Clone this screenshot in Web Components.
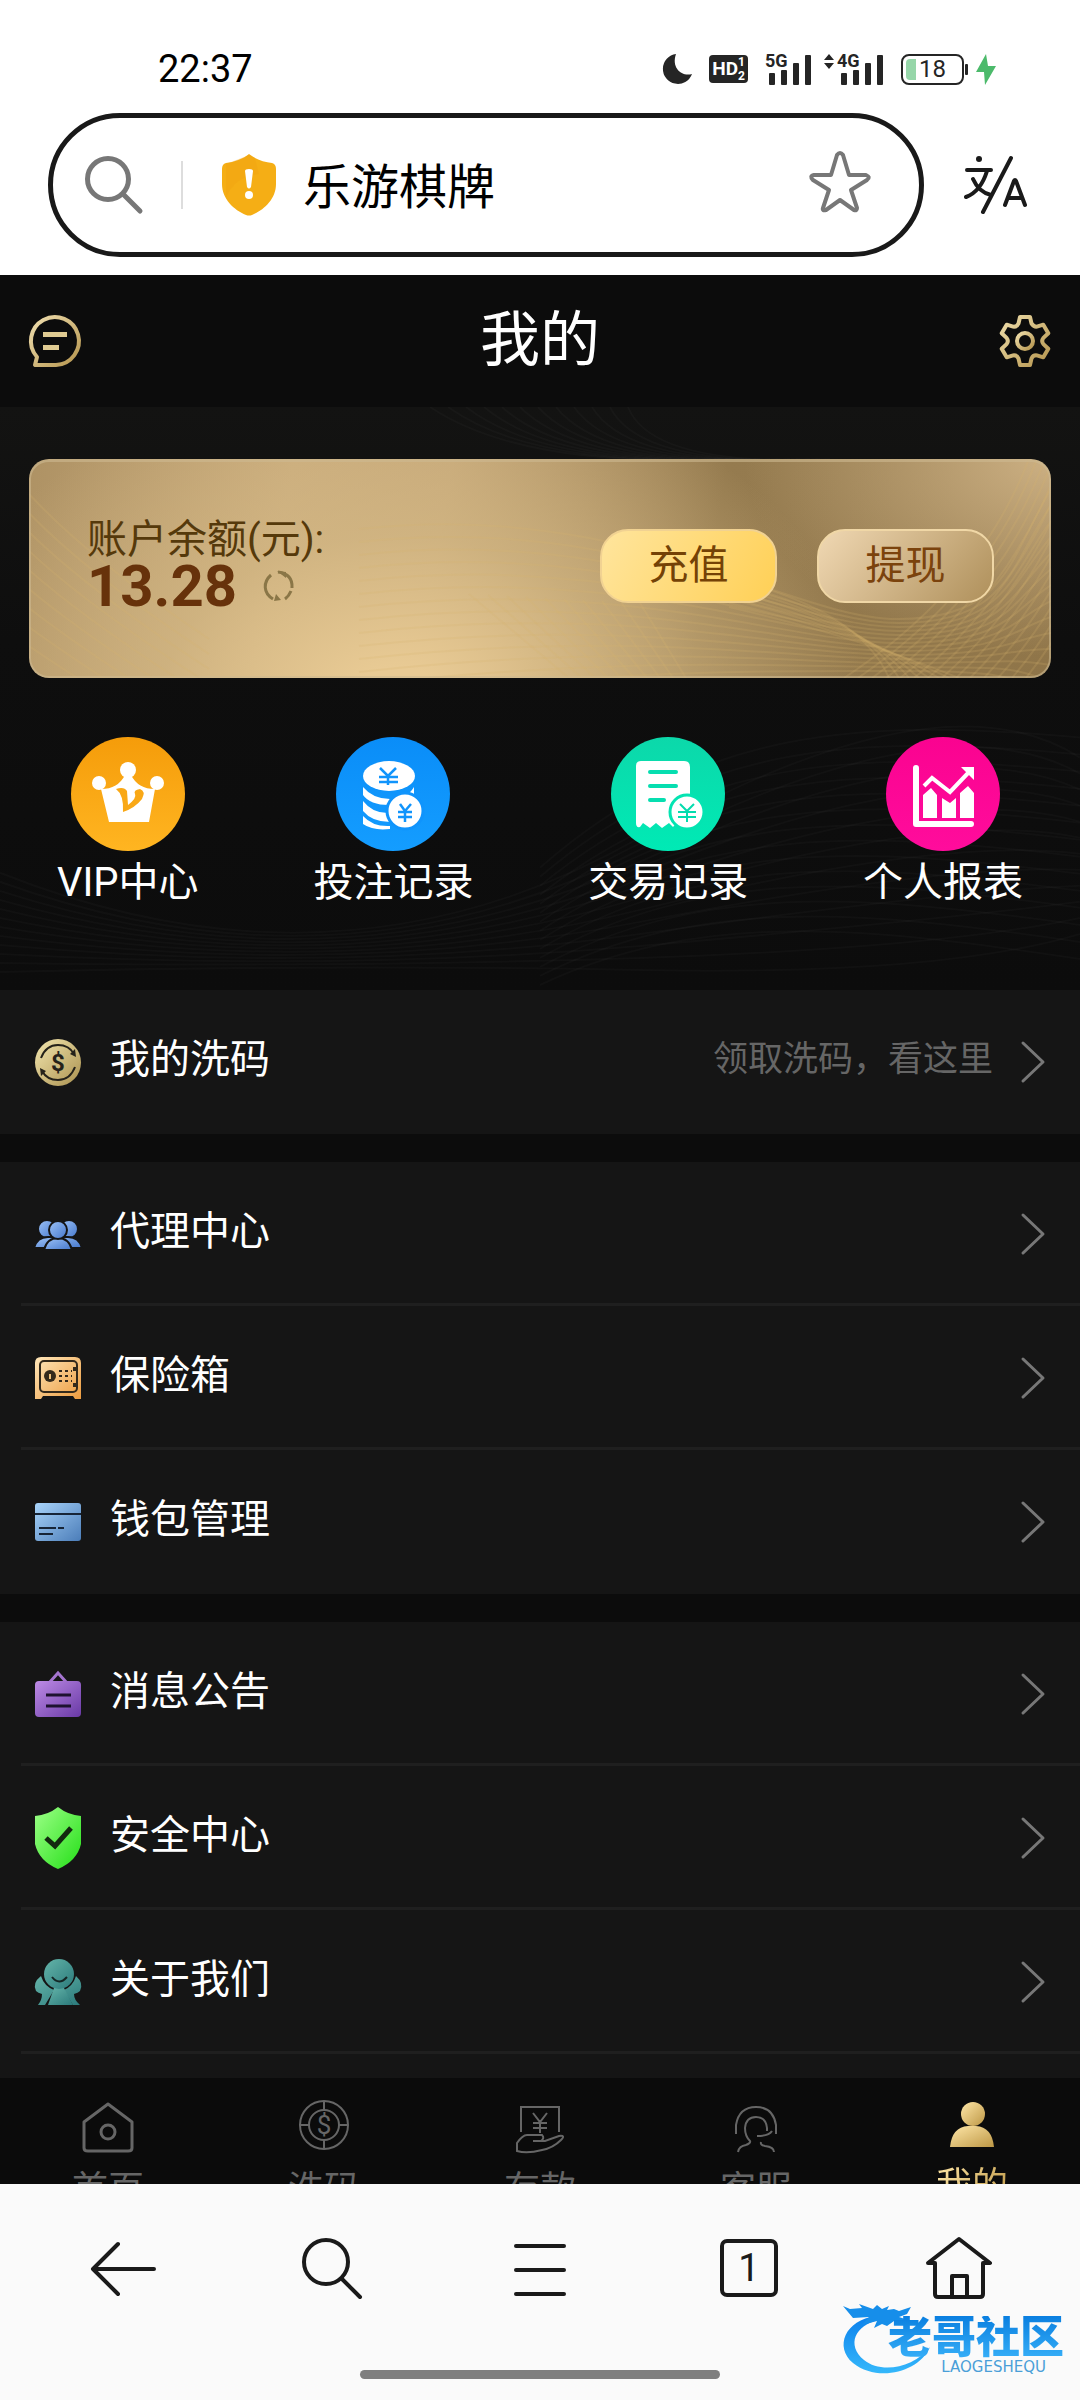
<!DOCTYPE html>
<html lang="zh-CN">
<head>
<meta charset="utf-8">
<meta name="viewport" content="width=device-width, initial-scale=1">
<title>我的</title>
<style>
  html, body {
    height: 100%;
    margin: 0;
  }

  body {
    display: flex;
    flex-direction: column;
    background: #0c0c0c;
    color: #fff;
    font-family: Roboto, "Noto Sans CJK SC", sans-serif;
    font-size: 40px;
  }
</style>
</head>
<body>
  <status-bar time="22:37" battery="18"></status-bar>
  <address-bar value="乐游棋牌"></address-bar>

  <web-view>
    <page-header>我的</page-header>
    <page-hero>
      <balance-card amount="13.28">账户余额(元):</balance-card>
      <quick-links>
        <quick-link icon="vip">VIP中心</quick-link>
        <quick-link icon="bets">投注记录</quick-link>
        <quick-link icon="receipt">交易记录</quick-link>
        <quick-link icon="report">个人报表</quick-link>
      </quick-links>
    </page-hero>
    <menu-group>
      <menu-row icon="rebate" hint="领取洗码，看这里" plain>我的洗码</menu-row>
    </menu-group>
    <menu-group>
      <menu-row icon="agents">代理中心</menu-row>
      <menu-row icon="safe">保险箱</menu-row>
      <menu-row icon="card" plain>钱包管理</menu-row>
    </menu-group>
    <menu-group last>
      <menu-row icon="notice">消息公告</menu-row>
      <menu-row icon="security">安全中心</menu-row>
      <menu-row icon="about">关于我们</menu-row>
    </menu-group>
    <tab-bar slot="tabs">
      <tab-item icon="tab-home">首页</tab-item>
      <tab-item icon="tab-rebate">洗码</tab-item>
      <tab-item icon="tab-deposit">存款</tab-item>
      <tab-item icon="tab-service">客服</tab-item>
      <tab-item icon="tab-me" active>我的</tab-item>
    </tab-bar>
  </web-view>

  <browser-nav tabs="1"></browser-nav>

<script>
const gradient = (from, to, x2 = 1) => `
  <defs><linearGradient id="g" x1="0" y1="0" x2="${x2}" y2="1">
    <stop stop-color="${from}"/><stop offset="1" stop-color="${to}"/>
  </linearGradient></defs>`;

// name: [width, height, markup]
const icons = {
  moon: [30, 30, `<path fill="#252525" d="M14 0A15 15 0 1 0 30 20C20 23 9 14 14 0Z"/>`],
  bolt: [20, 31, `<path fill="#4cba6b" d="M10 0 0 18h8l1 13L20 12h-8Z"/>`],
  search: [58, 58, `<g fill="none" stroke="#777" stroke-width="5" stroke-linecap="round">
    <circle cx="23" cy="23" r="20.5"/><path d="m39 39 16 16"/></g>`],
  warning: [56, 62, `<path fill="#f5ae15" d="M28 0C34 5 43 8 51 9q4 1 4 6V30C55 45 43 56 31 61q-3 1-6 0C13 56 1 45 1 30V15q0-5 4-6C13 8 22 5 28 0Z"/>
    <path fill="#f0a012" d="M28 1 5 10v34C12 26 26 22 38 20L34 4Z" opacity=".3"/>
    <path fill="#fff" d="M24 17q0-2 4-2t4 2l-2 16q-2 3-4 0Z"/><circle cx="28" cy="41" r="4" fill="#fff"/>`],
  star: [62, 60, `<path fill="none" stroke="#777" stroke-width="4" stroke-linejoin="round" d="M28 3q3-4 6 0l6 20h17q5 2 1 5L42 38l6 18q0 3-3 2L31 48 17 58q-4 1-3-2l6-18L4 28q-4-4 1-5h17Z"/>`],
  translate: [64, 60, `<g fill="none" stroke="#1a1a1a" stroke-width="4" stroke-linecap="round" stroke-linejoin="round">
    <path d="M3 15h24M23 16C19 29 13 38 2 42M9 24c4 9 9 14 18 16M47 3 19 57M41 50l9-24q1-2 2 0l9 24M44 43h14"/></g>
    <circle cx="15" cy="4" r="3" fill="#1a1a1a"/>`],
  chat: [52, 52, `${gradient('#f0dfb0', '#b6964f')}
    <path fill="none" stroke="url(#g)" stroke-width="4" stroke-linejoin="round" d="M6 50H27A24 24 0 1 0 8 42Z"/>
    <path fill="#e0cb92" d="M14 17h24v5H14Zm0 13h16v5H14Z"/>`],
  gear: [52, 52, `${gradient('#eeddaa', '#b6964f')}
    <g transform="translate(26 26)" fill="none" stroke="url(#g)" stroke-width="4" stroke-linejoin="round">
    <path d="M-5-24H5L6.5-17.5Q9-14 11.9-14.4L18.3-16.3 23.3-7.7 18.4-3.1Q16 0 18.4 3.1L23.3 7.7 18.3 16.3 11.9 14.4Q8 14 6.5 17.5L5 24H-5L-6.5 17.5Q-8 14-11.9 14.4L-18.3 16.3-23.3 7.7-18.4 3.1Q-16 0-18.4-3.1L-23.3-7.7-18.3-16.3-11.9-14.4Q-8-14-6.5-17.5Z"/>
    <circle r="8"/></g>`],
  refresh: [30, 30, `<g fill="none" stroke="#8a7647" stroke-width="3"><path d="M7 4C-1 11-1 22 9 28M14 1Q29 3 28 17M27 20q-2 5-6 8"/></g>
    <path fill="#8a7647" d="m13 0 9 1v6Zm4 29-7 1 2-7Z"/>`],
  vip: [114, 114, `${gradient('#f59c0a', '#ffb521', 0)}<circle cx="57" cy="57" r="57" fill="url(#g)"/>
    <g fill="#fff"><circle cx="57" cy="33" r="8"/><circle cx="28" cy="46" r="7"/><circle cx="86" cy="46" r="7"/>
    <path d="M30 52Q47 52 54 38h6Q67 52 84 52L78 85H38Z"/></g>
    <path fill="#f9a816" d="M45 52q8-3 11 2l1 14q9-7 7-11-2-4 5-5 6 2 2 10-7 9-19 13Q53 58 45 52Z"/>`],
  bets: [114, 114, `${gradient('#0a8df8', '#149dff', 0)}<circle cx="57" cy="57" r="57" fill="url(#g)"/>
    <g fill="#fff"><ellipse cx="53" cy="39" rx="26" ry="15"/>
    <path d="M27 50q10 12 27 12t24-12v7Q69 68 53 68 34 68 27 58Zm0 14q10 13 27 12v9Q36 85 27 74Zm0 15q10 11 27 10v3Q37 94 27 87Z"/></g>
    <circle cx="69" cy="74" r="18" fill="#fff" stroke="#1094fc" stroke-width="3"/>
    <g fill="none" stroke="#1094fc" stroke-width="2.5"><path d="m44 31 8 8 8-8M52 39v9M43 40h19M43 45h19m2 22 5 7 6-7m-6 7v11m-7-10h14m-14 5h14"/></g>`],
  receipt: [114, 114, `${gradient('#0cd8aa', '#00eab5', 0)}<circle cx="57" cy="57" r="57" fill="url(#g)"/>
    <path fill="#fff" d="M30 24h43q6 0 6 6v40L62 90l-4-4-7 5-6-5-6 5-7-5-3 4q-4 1-4-4V29q0-5 5-5Z"/>
    <path fill="none" stroke="#06deb0" stroke-width="4" stroke-linecap="round" d="M39 35h26M39 49h26M39 63h14"/>
    <circle cx="76" cy="75" r="17" fill="#fff" stroke="#04e4b2" stroke-width="3"/>
    <path fill="none" stroke="#04dcae" stroke-width="2" d="m69 67 7 7 7-7m-7 7v11m-9-10h18m-18 5h18"/>`],
  report: [114, 114, `${gradient('#fa0390', '#ff0c9c', 0)}<circle cx="57" cy="57" r="57" fill="url(#g)"/>
    <path fill="none" stroke="#fff" stroke-width="6" stroke-linecap="round" stroke-linejoin="round" d="M30 31v56h55"/>
    <path fill="#fff" d="m37 58 8-7 6 7v23H37Zm19 3 8 5 6-5v20H56Zm18-5 8-7 6 7v25H74ZM75 30h13v13Z"/>
    <path fill="none" stroke="#fff" stroke-width="4" d="m38 49 8-8 18 14 19-20"/>`],
  rebate: [46, 47, `${gradient('#f3e6af', '#aa914f')}<ellipse cx="23" cy="23.5" rx="23" ry="23.5" fill="url(#g)"/>
    <g fill="none" stroke="#25221a" stroke-width="2"><path d="M6 19Q11 6 23 6q11 0 16 9M40 28Q35 41 23 41 12 41 7 32"/></g>
    <path fill="#25221a" d="m40 10 1 8-6-3ZM6 37l-1-8 6 3Z"/>
    <text x="23" y="32" font-size="24" font-weight="700" fill="#25221a" text-anchor="middle">$</text>`],
  agents: [46, 30, `${gradient('#9dc3f8', '#4577cb')}<g fill="url(#g)" stroke="#151515" stroke-width="2">
    <circle cx="12" cy="10" r="9"/><circle cx="34" cy="10" r="9"/>
    <path d="M-1 29Q2 18 13 18h20Q44 18 47 29Z"/><path d="M9 31Q12 19 23 19T37 31Z"/><circle cx="23" cy="11" r="9"/></g>`],
  safe: [46, 42, `${gradient('#ffe6b9', '#ec9c40')}<path fill="url(#g)" d="M6 0h34q6 0 6 6v36h-6l-2-3H8l-2 3H0V6q0-6 6-6Z"/>
    <rect x="5" y="4" width="37" height="31" rx="4" fill="none" stroke="#33291b" stroke-width="2"/>
    <circle cx="15" cy="19" r="6" fill="#33291b"/><path stroke="#efc17a" stroke-width="2" d="M15 17v5"/>
    <path stroke="#33291b" stroke-width="2" stroke-dasharray="3 3" d="M24 14h13M24 19h13M24 24h13"/><path fill="#33291b" d="M38 10h4v4h-4Zm0 16h4v4h-4Z"/>`],
  card: [46, 38, `${gradient('#a9d4fa', '#4b7db9')}<rect width="46" height="38" rx="3" fill="url(#g)"/>
    <path stroke="#172537" stroke-width="2" d="M0 11h46M4 25h17M23 25h6M4 31h14"/>`],
  notice: [46, 46, `${gradient('#bd8be5', '#6939a6')}<path fill="none" stroke="#a474cf" stroke-width="3" d="m14 12 9-10 9 10"/>
    <rect y="10" width="46" height="36" rx="4" fill="url(#g)"/><path stroke="#1e1230" stroke-width="3" d="M11 24h25M11 35h25"/>`],
  security: [46, 62, `${gradient('#9cff87', '#25df18')}<path fill="url(#g)" d="M23 0Q33 8 46 9V37Q42 54 23 62 4 54 0 37V9Q13 8 23 0Z"/>
    <path fill="none" stroke="#12290f" stroke-width="5" d="m11 31 9 8 16-18"/>`],
  about: [46, 46, `${gradient('#64b4a9', '#2b7a7b')}<g fill="url(#g)">
    <path d="M6 17Q-3 24 1 32q2 2 6 3Q7 41 3 46h7l9-15Q9 27 6 17ZM41 17q8 7 4 15-2 2-6 3 0 6 6 11h-7l-9-15Q38 27 41 17Z"/>
    <path d="M19 29h10l9 17H13Z"/><circle cx="24" cy="15" r="15"/></g>
    <path fill="none" stroke="#152726" stroke-width="2" d="M17 18q7 9 15 0"/>`],
  chevron: [24, 42, `<path fill="none" stroke="#777" stroke-width="3" stroke-linecap="round" stroke-linejoin="round" d="m2 2 20 19L2 40"/>`],
  'tab-home': [52, 52, `<g fill="none" stroke="#666" stroke-width="3" stroke-linejoin="round"><path d="M26 4 2 22v26q0 3 4 3h40q4 0 4-3V22Z"/><circle cx="26" cy="32" r="7"/></g>`],
  'tab-rebate': [52, 52, `<g fill="none" stroke="#666" stroke-width="2"><circle cx="26" cy="25" r="24"/><circle cx="26" cy="25" r="15"/><path d="M26 1v9m0 30v9M2 25h9m30 0h9"/></g>
    <text x="26" y="34" font-size="26" fill="#666" text-anchor="middle">$</text>`],
  'tab-deposit': [52, 52, `<g fill="none" stroke="#666" stroke-width="2"><path d="M7 32V7h38v25M19 13l7 9 7-9m-7 9v11m-7-10h14m-14 5h14M3 51V43q6-9 11-8h14q3 3-1 6h-8 12l14-5q7-1 2 4-8 8-19 10-15 4-25 1Z"/></g>`],
  'tab-service': [52, 52, `<g fill="none" stroke="#666" stroke-width="2"><path d="M6 34V25Q9 7 26 7T46 25v9M16 45q5-2 4-4-5-5-5-13Q16 17 26 17t11 11v3M8 52q1-6 8-7M42 31q-3 5-15 5M31 42q-1 3 4 4 9 1 9 6"/></g>`],
  'tab-me': [48, 48, `${gradient('#ffe7a8', '#bd9745')}<g fill="url(#g)"><circle cx="25" cy="14" r="12"/><path d="M2 47Q4 27 20 26h8q16 1 18 21Z"/></g>`],
  back: [64, 64, `<path fill="none" stroke="#1a1a1a" stroke-width="4" stroke-linecap="round" stroke-linejoin="round" d="M28 8 3 33l25 25M4 33h60"/>`],
  find: [64, 64, `<g fill="none" stroke="#1a1a1a" stroke-width="4" stroke-linecap="round"><circle cx="27" cy="26" r="22"/><path d="m43 43 18 18"/></g>`],
  menu: [64, 64, `<path stroke="#1a1a1a" stroke-width="4" stroke-linecap="round" d="M8 10h48M8 34h48M8 58h48"/>`],
  house: [64, 64, `<g fill="none" stroke="#1a1a1a" stroke-width="4" stroke-linejoin="round"><path d="M2 27 33 3l31 24h-7v31q0 3-3 3H12q-3 0-3-3V27ZM26 61V40h15v21"/></g>`],
};

const waves = (width, height, stroke, paths) => {
  const svg = `<svg xmlns="http://www.w3.org/2000/svg" viewBox="0 0 ${width} ${height}" preserveAspectRatio="none" fill="none" stroke="${stroke}" stroke-width="2">${paths.map(d => `<path d="${d}"/>`).join('')}</svg>`;
  return `url("data:image/svg+xml,${encodeURIComponent(svg)}")`;
};

const times = (n, fn) => Array.from({ length: n }, (_, i) => fn(i));

const cardWaves = waves(1022, 219, 'rgba(215,180,110,.2)', [
  ...times(14, i => `M330 ${70 + i * 13}C600 ${40 + i * 13} 760 ${160 + i * 4} 869 ${160 + i * 4}S980 ${100 + i * 9} 1022 ${30 + i * 16}`),
  ...times(14, i => `M${815 + i * 14} 219Q${950 + i * 9} 130 ${1000 + i * 8} 0`),
  ...times(10, i => `M${440 + i * 19} ${135 + i}L${540 + i * 13} 219`),
  ...times(8, i => `M700 ${120 + i * 4}Q830 ${150 + i * 4} ${860 + i * 10} 219`),
  ...times(9, i => `M0 ${35 + i * 19}Q60 ${100 + i * 16} 180 ${180 + i * 15}`),
]);

const heroWaves = waves(1080, 582, 'rgba(255,255,255,.022)', [
  ...times(12, i => `M0 ${465 + i * 9}Q340 ${600 - i * 4} 640 ${430 + i * 12}T1080 ${350 + i * 16}`),
  ...times(14, i => `M540 ${460 + i * 9}C700 ${320 + i * 14} 860 ${310 + i * 16} 1080 ${330 + i * 17}`),
  ...times(12, i => `M${430 + i * 18} 0Q${520 + i * 12} 60 ${720 + i * 10} 52`),
]);

class BaseElement extends HTMLElement {
  constructor() {
    super();
    this.attachShadow({ mode: 'open' });
  }

  connectedCallback() {
    const template = document.createElement('template');
    template.innerHTML = `
      <style>
        *, *:before, *:after { box-sizing: border-box; }
        :host { display: block; box-sizing: border-box; }
        a { color: inherit; text-decoration: none; }
        button { border: 0; padding: 0; background: none; color: inherit; font: inherit; cursor: pointer; }
        ${this.styles}
      </style>
      ${this.markup}`;
    this.shadowRoot.replaceChildren(template.content.cloneNode(true));
  }

  get styles() { return ''; }
  get markup() { return '<slot></slot>'; }
}

customElements.define('ui-icon', class extends BaseElement {
  get styles() {
    return `:host { flex: none; } svg { display: block; overflow: visible; }`;
  }
  get markup() {
    const [width, height, body] = icons[this.getAttribute('name')];
    return `<svg width="${width}" height="${height}" viewBox="0 0 ${width} ${height}" aria-hidden="true">${body}</svg>`;
  }
});

customElements.define('signal-bars', class extends BaseElement {
  get styles() {
    return `svg { display: block; fill: #252525; font-weight: 700; }`;
  }
  get markup() {
    const x = this.hasAttribute('data') ? 13 : 0;
    return `
      <svg width="${47 + x}" height="34" viewBox="${-x} 0 ${47 + x} 34">
        ${x ? '<path d="m-13 8 5-6 5 6Zm0 3h10l-5 6Z"/>' : ''}
        <text x="0" y="15" font-size="18">${this.getAttribute('label')}</text>
        <rect x="4" y="21" width="6" height="12" rx="1"/><rect x="16" y="18" width="6" height="15" rx="1"/>
        <rect x="28" y="11" width="6" height="22" rx="1"/><rect x="40" y="3" width="6" height="30" rx="1"/>
      </svg>`;
  }
});

customElements.define('status-bar', class extends BaseElement {
  get styles() {
    return `
      :host {
        display: flex;
        justify-content: space-between;
        align-items: center;
        padding: 49px 84px 24px 158px;
        background: #fff;
        color: #000;
        font-size: 38px;
        line-height: 40px;
      }
      .icons { display: flex; align-items: center; gap: 17px; }
      .signals { display: flex; gap: 12px; }
      .power { display: flex; align-items: center; gap: 8px; }
      .hd { display: flex; padding: 0 3px; height: 28px; border-radius: 4px; background: #252525; color: #fff; font-size: 19px; font-weight: 700; line-height: 28px; }
      .sims { display: grid; font-size: 12px; line-height: 13px; padding-top: 1px; }
      .battery { display: flex; align-items: center; }
      .cell {
        display: flex;
        align-items: center;
        gap: 3px;
        width: 63px;
        height: 31px;
        padding: 0 3px;
        border: 2px solid #252525;
        border-radius: 8px;
        color: #252525;
        font-size: 24px;
      }
      .cell:before { content: ""; width: 10px; height: 21px; border-radius: 4px 0 0 4px; background: #96d6a9; }
      .battery:after { content: ""; width: 3px; height: 11px; margin-left: 1px; border-radius: 1px; background: #252525; }
    `;
  }
  get markup() {
    return `
      <time>${this.getAttribute('time')}</time>
      <div class="icons">
        <ui-icon name="moon"></ui-icon>
        <div class="hd">HD<span class="sims"><span>1</span><span>2</span></span></div>
        <div class="signals"><signal-bars label="5G"></signal-bars><signal-bars label="4G" data></signal-bars></div>
        <div class="power">
          <div class="battery"><div class="cell">${this.getAttribute('battery')}</div></div>
          <ui-icon name="bolt"></ui-icon>
        </div>
      </div>`;
  }
});

customElements.define('address-bar', class extends BaseElement {
  get styles() {
    return `
      :host { display: flex; align-items: center; gap: 40px; padding: 0 52px 18px 48px; background: #fff; }
      form {
        flex: 1;
        min-width: 0;
        display: flex;
        align-items: center;
        height: 144px;
        padding: 0 48px 0 32px;
        border: 5px solid #191919;
        border-radius: 72px;
      }
      form button { padding-bottom: 6px; }
      .divider { width: 2px; height: 48px; margin: 0 38px; background: #ddd; }
      input {
        flex: 1;
        min-width: 0;
        margin-left: 26px;
        padding: 6px 0 0;
        border: 0;
        outline: 0;
        background: none;
        color: #000;
        font: inherit;
        font-size: 48px;
        line-height: 64px;
      }
    `;
  }
  get markup() {
    return `
      <form>
        <ui-icon name="search"></ui-icon>
        <span class="divider"></span>
        <ui-icon name="warning"></ui-icon>
        <input type="text" aria-label="网址" value="${this.getAttribute('value')}">
        <button type="button" aria-label="收藏"><ui-icon name="star"></ui-icon></button>
      </form>
      <button type="button" aria-label="翻译"><ui-icon name="translate"></ui-icon></button>`;
  }
});

customElements.define('web-view', class extends BaseElement {
  get styles() {
    return `
      :host { flex: 1; min-height: 0; display: flex; flex-direction: column; }
      main { flex: 1; min-height: 0; display: flex; flex-direction: column; overflow: hidden; }
      main ::slotted(*) { flex-shrink: 0; }
    `;
  }
  get markup() {
    return `<main><slot></slot></main><slot name="tabs"></slot>`;
  }
});

customElements.define('page-header', class extends BaseElement {
  get styles() {
    return `
      :host { display: flex; justify-content: space-between; align-items: center; height: 132px; padding: 0 29px; }
      h1 { margin: 0; font-size: 60px; font-weight: 400; line-height: 72px; }
    `;
  }
  get markup() {
    return `
      <button aria-label="消息"><ui-icon name="chat"></ui-icon></button>
      <h1><slot></slot></h1>
      <button aria-label="设置"><ui-icon name="gear"></ui-icon></button>`;
  }
});

customElements.define('page-hero', class extends BaseElement {
  get styles() {
    return `
      :host {
        padding: 52px 0 79px;
        background: ${heroWaves} 0 0 / 100% 100%, linear-gradient(#131312, #0e0e0e 40%, #0c0c0c);
      }
    `;
  }
});

customElements.define('balance-card', class extends BaseElement {
  get styles() {
    return `
      :host {
        display: flex;
        justify-content: space-between;
        align-items: center;
        margin: 0 29px;
        padding: 54px 55px 60px 56px;
        border: 2px solid rgba(205, 185, 145, .6);
        border-top-width: 3px;
        border-radius: 20px;
        background:
          ${cardWaves} 0 0 / 100% 100% border-box,
          radial-gradient(ellipse 30% 90% at 100% 0, #ccb083, transparent) border-box,
          radial-gradient(ellipse 46% 150% at 36% 110%, #e8ca94 10%, rgba(212, 184, 132, .7) 50%, transparent) border-box,
          linear-gradient(100deg, #ae9264, #c9ab7c 25%, #c4a678 40%, #957b4f 66%, #8f7549) border-box;
      }
      .balance { padding-bottom: 8px; color: #55390b; line-height: 48px; }
      .amount { display: flex; align-items: center; gap: 27px; line-height: 44px; }
      strong { color: #67320b; font-size: 58px; font-weight: 700; }
      .actions { display: flex; gap: 40px; }
      .actions button {
        width: 177px;
        height: 74px;
        border: 2px solid #f1d292;
        border-radius: 28px;
        background: linear-gradient(120deg, #ffe59d, #ffd056);
        color: #744206;
        line-height: 68px;
      }
      .actions button + button { border-color: #f0d7a6; background: linear-gradient(130deg, #f0d8b3, #af905b); color: #7b430d; }
    `;
  }
  get markup() {
    return `
      <div class="balance">
        <slot></slot>
        <div class="amount">
          <strong>${this.getAttribute('amount')}</strong>
          <button aria-label="刷新"><ui-icon name="refresh"></ui-icon></button>
        </div>
      </div>
      <div class="actions"><button>充值</button><button>提现</button></div>`;
  }
});

customElements.define('quick-links', class extends BaseElement {
  get styles() {
    return `:host { display: flex; justify-content: space-between; padding: 59px 57px 0; }`;
  }
});

customElements.define('quick-link', class extends BaseElement {
  get styles() {
    return `a { display: flex; flex-direction: column; align-items: center; gap: 4px; line-height: 56px; }`;
  }
  get markup() {
    return `<a href="#"><ui-icon name="${this.getAttribute('icon')}"></ui-icon><slot></slot></a>`;
  }
});

customElements.define('menu-group', class extends BaseElement {
  get styles() {
    return `
      :host { margin-bottom: 28px; background: #151515; }
      :host([last]) { flex-grow: 1; margin-bottom: 0; }
    `;
  }
});

customElements.define('menu-row', class extends BaseElement {
  get styles() {
    return `
      a {
        display: flex;
        align-items: center;
        height: 144px;
        margin-left: 21px;
        padding: 0 35px 0 14px;
        box-shadow: inset 0 -3px #1f1f1f;
        line-height: 56px;
      }
      :host([plain]) a { box-shadow: none; }
      .label { flex: 1; margin-left: 29px; padding-bottom: 4px; }
      .hint { margin-right: 28px; padding-bottom: 4px; color: #666; font-size: 35px; }
    `;
  }
  get markup() {
    const hint = this.getAttribute('hint');
    return `
      <a href="#">
        <ui-icon name="${this.getAttribute('icon')}"></ui-icon>
        <span class="label"><slot></slot></span>
        ${hint ? `<span class="hint">${hint}</span>` : ''}
        <ui-icon name="chevron"></ui-icon>
      </a>`;
  }
});

customElements.define('tab-bar', class extends BaseElement {
  get styles() {
    return `
      :host { flex: none; height: 106px; overflow: hidden; background: #0b0b0b; }
      nav { display: flex; }
    `;
  }
  get markup() {
    return `<nav><slot></slot></nav>`;
  }
});

customElements.define('tab-item', class extends BaseElement {
  get styles() {
    return `
      :host { flex: 1; color: #666; font-size: 36px; line-height: 44px; }
      a { display: flex; flex-direction: column; align-items: center; gap: 16px; padding-top: 22px; }
      :host([active]) span { background: linear-gradient(120deg, #ffe7a8, #bd9745); background-clip: text; color: transparent; }
    `;
  }
  get markup() {
    return `<a href="#"><ui-icon name="${this.getAttribute('icon')}"></ui-icon><span><slot></slot></span></a>`;
  }
});

customElements.define('community-mark', class extends BaseElement {
  get styles() {
    return `
      :host { display: grid; grid-template-columns: 40px auto; width: 222px; }
      svg { grid-area: 1 / 1; display: block; overflow: visible; }
      .name { grid-area: 1 / 2; padding-top: 12px; text-align: right; }
      b { display: block; background: linear-gradient(#0a7fe0, #38b0f8); background-clip: text; color: transparent; font-size: 44px; font-weight: 900; line-height: 44px; }
      small { display: block; padding-right: 18px; color: #4a9fd8; font: 15px/15px "DejaVu Sans", sans-serif; }
    `;
  }
  get markup() {
    return `
      <svg width="40" height="70" viewBox="0 0 40 70">
        ${gradient('#0b80ec', '#35b8fb', 0)}
        <path fill="url(#g)" d="M34 12C3 16-8 43 11 59c25 20 66 9 77-16C72 64 39 70 22 56 4 41 13 21 37 16Z"/>
        <path fill="#168eea" d="M1 2 8 5l12-1-3-4 14 5 4-4 5 4 7-3-2 4 7-1 5 2 12-4-4 7-8 3 9 3-5 4-9-3-7 5-5-2-8 4 3-7-15 4 7-8-16 1Z"/>
      </svg>
      <div class="name"><b>老哥社区</b><small>LAOGESHEQU</small></div>`;
  }
});

customElements.define('browser-nav', class extends BaseElement {
  get styles() {
    return `
      :host { flex: none; position: relative; padding: 52px 0 21px; background: #fafafa; color: #1a1a1a; }
      nav { display: flex; justify-content: space-between; padding: 0 90px; }
      nav button { display: grid; place-items: center; width: 64px; height: 64px; }
      .count { width: 58px; height: 58px; border: 4px solid #1a1a1a; border-radius: 7px; font-size: 38px; line-height: 50px; }
      .handle { width: calc(100% / 3); height: 9px; margin: 70px auto 0; border-radius: 5px; background: #7f7f7f; }
      community-mark { position: absolute; right: 16px; bottom: 25px; }
    `;
  }
  get markup() {
    return `
      <nav>
        <button aria-label="返回"><ui-icon name="back"></ui-icon></button>
        <button aria-label="搜索"><ui-icon name="find"></ui-icon></button>
        <button aria-label="菜单"><ui-icon name="menu"></ui-icon></button>
        <button aria-label="标签页"><span class="count">${this.getAttribute('tabs')}</span></button>
        <button aria-label="主页"><ui-icon name="house"></ui-icon></button>
      </nav>
      <div class="handle"></div>
      <community-mark></community-mark>`;
  }
});
</script>
</body>
</html>
